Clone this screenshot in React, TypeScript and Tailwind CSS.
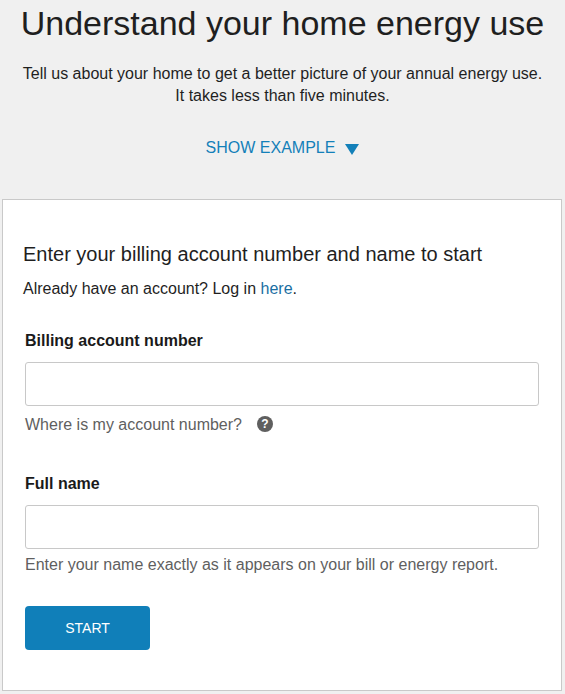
import { useState } from "react";

function Field({ label, value, onChange }: { label: string; value: string; onChange: (v: string) => void }) {
    return (
        <div>
            <label className="block text-[16px] leading-[20px] font-bold text-[#1a1a1a]">{label}</label>
            <input
                value={value}
                onChange={(e) => onChange(e.target.value)}
                className="mt-[11px] block w-full h-[44px] bg-white border border-[#c8c8c8] rounded-[3px]"
            />
        </div>
    );
}

export default function App() {
    const [account, setAccount] = useState("");
    const [name, setName] = useState("");

    return (
        <div className="w-[565px] h-[694px] overflow-hidden bg-[#f0f0f0] font-['Liberation_Sans',Arial,sans-serif] text-[#1f1f1f]">
            <div className="h-[199px] pt-[4px] text-center">
                <h1 className="text-[34px] leading-[38px] font-normal">Understand your home energy use</h1>
                <p className="mt-[21px] text-[16px] leading-[22px]">
                    Tell us about your home to get a better picture of your annual energy use.
                    <br />
                    It takes less than five minutes.
                </p>
                <div className="mt-[31px] flex items-center justify-center gap-[10px] text-[16px] leading-[20px] text-[#1380b9]">
                    <span>SHOW EXAMPLE</span>
                    <svg width="14" height="11" viewBox="0 0 14 11" className="mt-[2px]">
                        <path d="M0 0h14L7 11z" fill="#1380b9" />
                    </svg>
                </div>
            </div>

            <div className="ml-[2px] mr-[3px] h-[492px] bg-white border border-[#c9c9c9] pt-[42px] pl-[20px] pr-[22px]">
                <h2 className="text-[20px] leading-[24px] font-normal">Enter your billing account number and name to start</h2>
                <p className="mt-[13px] text-[16px] leading-[20px]">
                    Already have an account? Log in <a className="text-[#1a6fa3]">here</a>.
                </p>

                <div className="mt-[32px] ml-[2px]">
                    <Field label="Billing account number" value={account} onChange={setAccount} />
                    <div className="mt-[9px] flex items-center gap-[15px] text-[16px] leading-[20px] text-[#5f5f5f]">
                        <span>Where is my account number?</span>
                        <span className="mb-[2px] flex items-center justify-center w-[16px] h-[16px] rounded-full bg-[#5f5f5f] text-white text-[12px] leading-none font-bold">?</span>
                    </div>

                    <div className="mt-[39px]">
                        <Field label="Full name" value={name} onChange={setName} />
                    </div>
                    <p className="mt-[6px] text-[16px] leading-[20px] text-[#5f5f5f]">
                        Enter your name exactly as it appears on your bill or energy report.
                    </p>

                    <button className="mt-[31px] block w-[125px] h-[44px] rounded-[4px] bg-[#107fb9] text-white text-[14px]">START</button>
                </div>
            </div>
        </div>
    );
}
